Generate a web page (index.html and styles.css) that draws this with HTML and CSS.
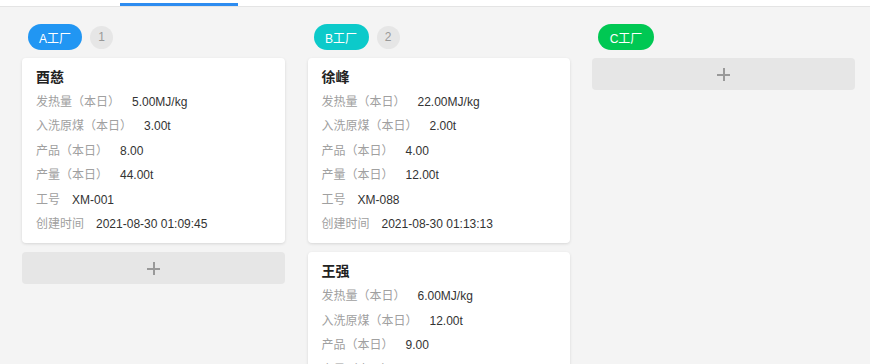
FILE: index.html
```html
<!DOCTYPE html>
<html lang="zh-CN">
<head>
<meta charset="utf-8">
<link rel="stylesheet" href="styles.css">
</head>
<body>
<div class="topnav"><span class="topnav-indicator"></span></div>
<div class="board">
  <div class="column">
    <div class="col-head"><span class="tag tag-a">A工厂</span><span class="count">1</span></div>
    <div class="card">
      <div class="card-name">酉慈</div>
      <div class="row"><span class="label">发热量（本日）</span><span class="value">5.00MJ/kg</span></div>
      <div class="row"><span class="label">入洗原煤（本日）</span><span class="value">3.00t</span></div>
      <div class="row"><span class="label">产品（本日）</span><span class="value">8.00</span></div>
      <div class="row"><span class="label">产量（本日）</span><span class="value">44.00t</span></div>
      <div class="row"><span class="label">工号</span><span class="value">XM-001</span></div>
      <div class="row"><span class="label">创建时间</span><span class="value">2021-08-30 01:09:45</span></div>
    </div>
    <div class="add"><span class="plus"></span></div>
  </div>
  <div class="column">
    <div class="col-head"><span class="tag tag-b">B工厂</span><span class="count">2</span></div>
    <div class="card">
      <div class="card-name">徐峰</div>
      <div class="row"><span class="label">发热量（本日）</span><span class="value">22.00MJ/kg</span></div>
      <div class="row"><span class="label">入洗原煤（本日）</span><span class="value">2.00t</span></div>
      <div class="row"><span class="label">产品（本日）</span><span class="value">4.00</span></div>
      <div class="row"><span class="label">产量（本日）</span><span class="value">12.00t</span></div>
      <div class="row"><span class="label">工号</span><span class="value">XM-088</span></div>
      <div class="row"><span class="label">创建时间</span><span class="value">2021-08-30 01:13:13</span></div>
    </div>
    <div class="card">
      <div class="card-name">王强</div>
      <div class="row"><span class="label">发热量（本日）</span><span class="value">6.00MJ/kg</span></div>
      <div class="row"><span class="label">入洗原煤（本日）</span><span class="value">12.00t</span></div>
      <div class="row"><span class="label">产品（本日）</span><span class="value">9.00</span></div>
      <div class="row"><span class="label">产量（本日）</span><span class="value">15.00t</span></div>
    </div>
  </div>
  <div class="column">
    <div class="col-head"><span class="tag tag-c">C工厂</span></div>
    <div class="add"><span class="plus"></span></div>
  </div>
</div>
</body>
</html>
```
FILE: styles.css
```css
html, body {
  margin: 0;
  padding: 0;
  background: #f4f4f4;
  font-family: "Liberation Sans", "Noto Sans CJK SC", sans-serif;
  font-size: 12px;
  color: #333;
  overflow: hidden;
  height: 364px;
}
.topnav {
  height: 6px;
  background: #fff;
  border-bottom: 1px solid #e4e4e4;
  display: flex;
  align-items: flex-end;
  padding-left: 120px;
}
.topnav-indicator {
  display: block;
  width: 118px;
  height: 3px;
  background: #2d8cf0;
}
.board {
  display: grid;
  grid-template-columns: 263px 262px 263px;
  column-gap: 22.5px;
  padding: 17px 0 0 22px;
  align-items: start;
}
.column {
  display: flex;
  flex-direction: column;
  gap: 9px;
}
.col-head {
  display: flex;
  align-items: center;
  gap: 8px;
  padding-left: 6px;
  height: 26px;
  margin-bottom: -1px;
}
.tag {
  display: inline-flex;
  align-items: center;
  justify-content: center;
  height: 26px;
  width: 54px;
  border-radius: 13px;
  color: #fff;
  font-size: 12px;
}
.tag-a { background: #2196f3; }
.tag-b { background: #0ccaca; width: 55px; }
.tag-c { background: #00c853; width: 56px; }
.count {
  display: inline-flex;
  align-items: center;
  justify-content: center;
  width: 23px;
  height: 23px;
  border-radius: 50%;
  background: #e6e6e6;
  color: #999;
  font-size: 12px;
}
.card {
  background: #fff;
  border-radius: 4px;
  box-shadow: 0 1px 3px rgba(0,0,0,0.12);
  padding: 12px 14px 7px;
}
.card-name {
  font-size: 14px;
  line-height: 14px;
  font-weight: bold;
  color: #222;
  margin-bottom: 6px;
}
.row {
  display: flex;
  gap: 12px;
  line-height: 24.4px;
  font-size: 12px;
}
.label { color: #a0a0a0; }
.value { color: #333; }
.add {
  height: 32px;
  background: #e6e6e6;
  border-radius: 4px;
  display: flex;
  align-items: center;
  justify-content: center;
}
.plus {
  position: relative;
  width: 13px;
  height: 13px;
  display: block;
}
.plus::before, .plus::after {
  content: "";
  position: absolute;
  background: #999;
}
.plus::before { left: 0; right: 0; top: 6px; height: 2px; }
.plus::after { top: 0; bottom: 0; left: 6px; width: 2px; }
```
